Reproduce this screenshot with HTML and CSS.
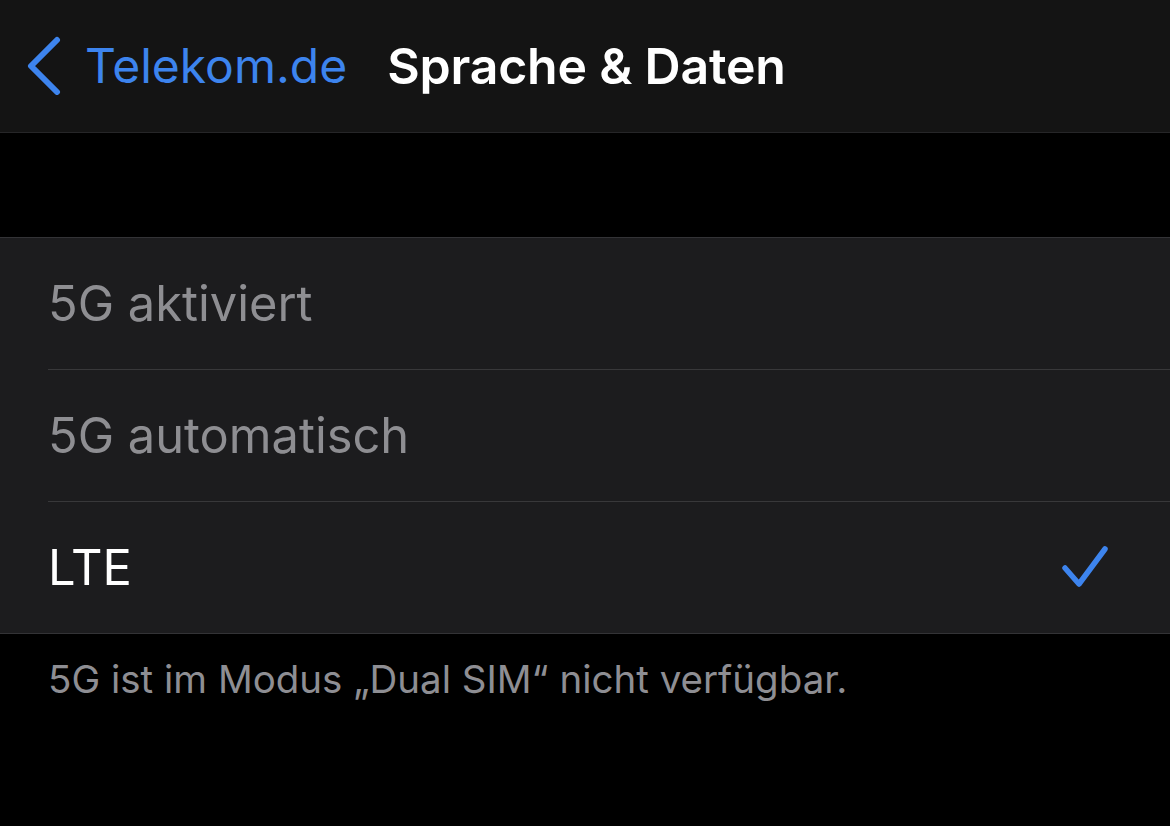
FILE: index.html
```html
<!DOCTYPE html>
<html>
<head>
  <title>Sprache &amp; Daten</title>
  <link rel="stylesheet" href="styles.css">
</head>
<body>
  <header class="navbar">
    <a class="back" href="#">
      <svg class="chevron" width="40" height="60" viewBox="0 0 40 60">
        <path d="M31 5 L5 31 L31 57" fill="none" stroke="#3d84ee" stroke-width="6" stroke-linecap="round" stroke-linejoin="round"/>
      </svg>
      <span>Telekom.de</span>
    </a>
    <h1>Sprache &amp; Daten</h1>
  </header>

  <div class="spacer"></div>

  <ul class="group">
    <li class="row muted">5G aktiviert</li>
    <li class="row muted">5G automatisch</li>
    <li class="row selected">
      <span>LTE</span>
      <svg class="check" width="52" height="50" viewBox="0 0 52 50">
        <path d="M5 25 L19 41 L45 6" fill="none" stroke="#3d84ee" stroke-width="5.5" stroke-linecap="round" stroke-linejoin="round"/>
      </svg>
    </li>
  </ul>

  <p class="footer">5G ist im Modus „Dual SIM“ nicht verfügbar.</p>
</body>
</html>
```

FILE: styles.css
```css
body {
  margin: 0;
  background: #000;
  font-family: Inter, "Noto Sans", sans-serif;
  color: #fff;
}
.navbar {
  height: 132px;
  background: #141414;
  border-bottom: 1px solid #262628;
  display: flex;
  align-items: center;
}
.back {
  display: flex;
  align-items: center;
  color: #3d84ee;
  text-decoration: none;
  font-size: 48px;
  padding-left: 26px;
  margin-top: -2px;
}
.chevron {
  margin-right: 19px;
}
.navbar h1 {
  margin: 0 0 0 40px;
  font-size: 50px;
  font-weight: 600;
  letter-spacing: -0.2px;
}
.spacer {
  height: 104px;
}
.group {
  list-style: none;
  margin: 0;
  padding: 0 0 0 48px;
  background: #1c1c1e;
  border-top: 1px solid #333336;
  border-bottom: 1px solid #333336;
}
.row {
  height: 131px;
  display: flex;
  align-items: center;
  justify-content: space-between;
  padding: 0 58px 0 0;
  font-size: 48.8px;
  border-bottom: 1px solid #38383a;
}
.row:last-child {
  border-bottom: none;
}
.muted {
  color: #8e8e92;
}
.selected {
  color: #fff;
}
.footer {
  margin: 22px 0 0 48px;
  font-size: 38.5px;
  color: #8e8e93;
}
```
